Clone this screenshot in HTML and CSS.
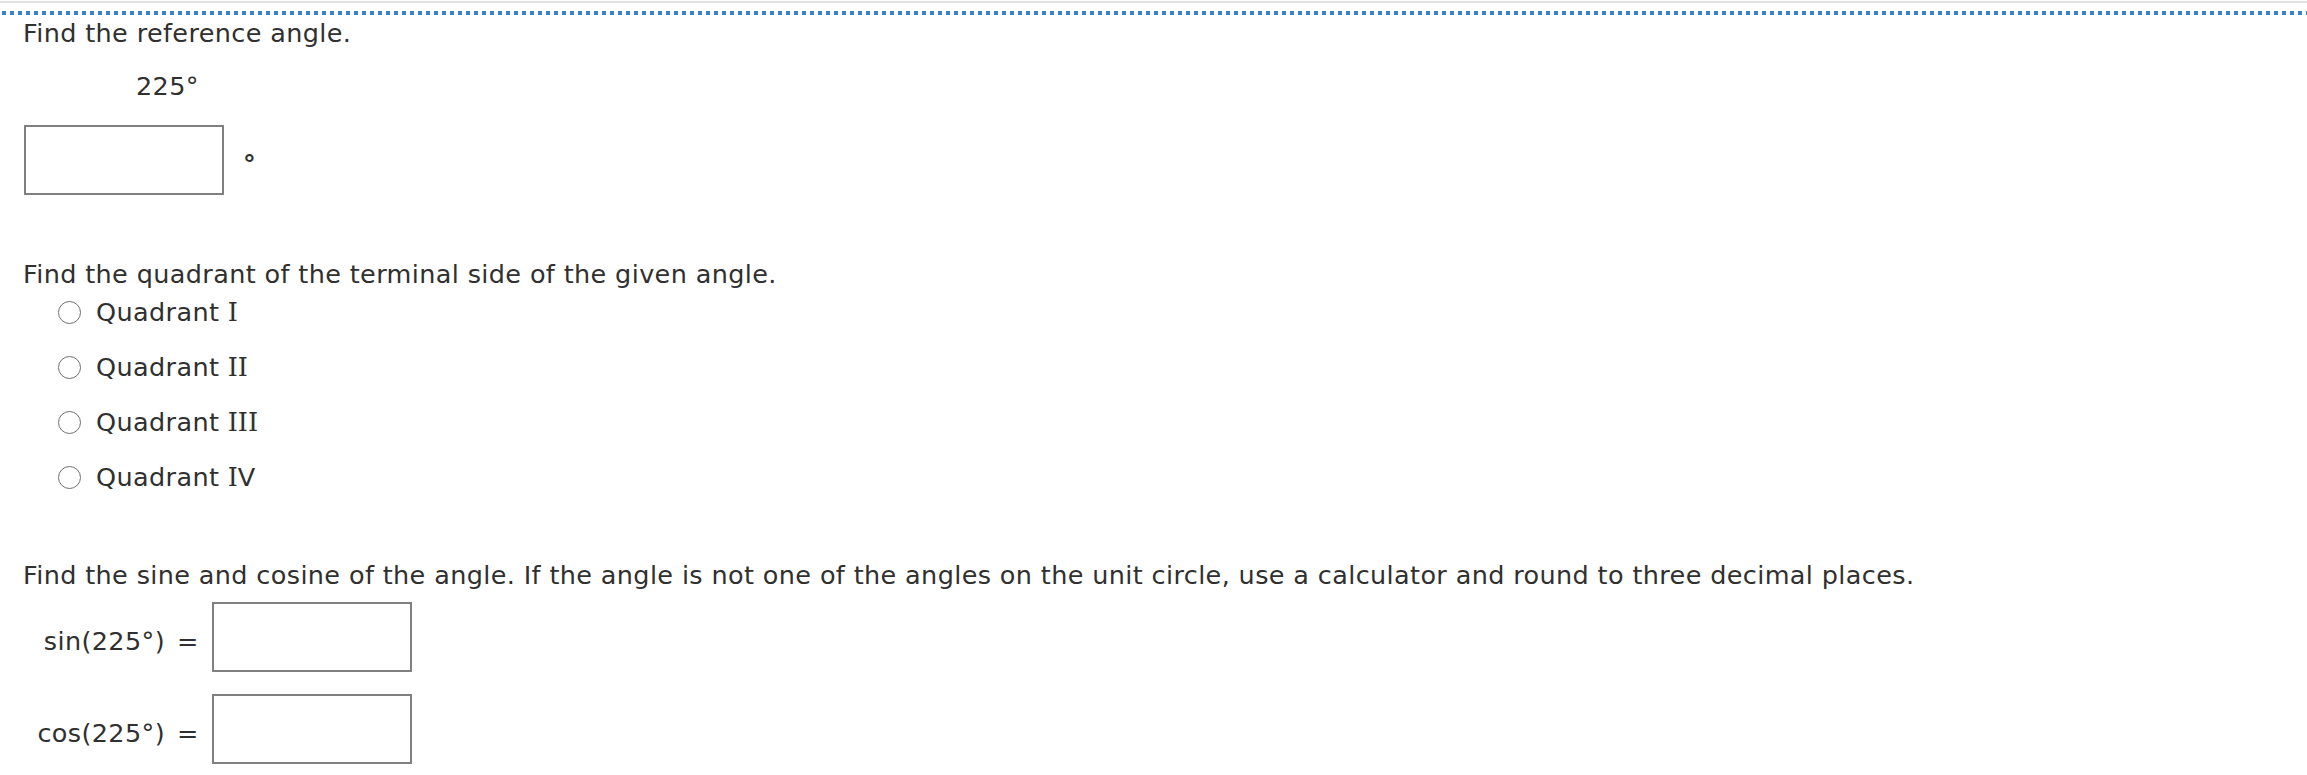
FILE: index.html
```html
<!DOCTYPE html>
<html>
<head>
<meta charset="utf-8">
<link rel="stylesheet" href="styles.css">
</head>
<body>
<div class="topbar"></div>
<div class="dots"></div>
<div class="content">
  <p class="line">Find the reference angle.</p>
  <p class="line given">225°</p>
  <div class="answer-row">
    <div class="box"></div>
    <span class="deg">°</span>
  </div>

  <p class="line q2">Find the quadrant of the terminal side of the given angle.</p>
  <div class="options">
    <div class="option"><span class="radio"></span><span class="line">Quadrant <span class="roman">I</span></span></div>
    <div class="option"><span class="radio"></span><span class="line">Quadrant <span class="roman">II</span></span></div>
    <div class="option"><span class="radio"></span><span class="line">Quadrant <span class="roman">III</span></span></div>
    <div class="option"><span class="radio"></span><span class="line">Quadrant <span class="roman">I</span>V</span></div>
  </div>

  <p class="line q3">Find the sine and cosine of the angle. If the angle is not one of the angles on the unit circle, use a calculator and round to three decimal places.</p>
  <div class="trig">
    <span class="label">sin(225°)</span><span class="eq">=</span><div class="box small"></div>
    <span class="label">cos(225°)</span><span class="eq">=</span><div class="box small"></div>
  </div>
</div>
</body>
</html>
```

FILE: styles.css
```css
html, body {
  margin: 0;
  padding: 0;
  background: #ffffff;
}
body {
  font-family: "DejaVu Sans", Verdana, sans-serif;
  font-size: 25.5px;
  letter-spacing: 0.37px;
  color: #303030;
}
.topbar {
  margin-top: 1px;
  height: 2px;
  background: #e1e1e1;
}
.dots {
  margin-top: 8px;
  height: 4px;
  background-image: linear-gradient(to right, #3a7fd6 50%, transparent 50%);
  background-size: 8px 4px;
  background-position: 2px 0;
  background-repeat: repeat-x;
}
.content {
  padding-left: 23px;
}
.line {
  margin: 0;
  line-height: 36px;
}
.roman {
  font-family: "DejaVu Serif", serif;
  letter-spacing: 0;
}
.given {
  margin-top: 17px;
  padding-left: 113px;
}
.answer-row {
  display: flex;
  align-items: center;
  margin-top: 21px;
}
.box {
  width: 196px;
  height: 66px;
  border: 2px solid #808080;
  background: #fff;
  margin-left: 1px;
}
.deg {
  line-height: 36px;
  margin-left: 19px;
  margin-top: 8px;
  font-weight: bold;
}
.q2 {
  margin-top: 61px;
}
.options {
  display: flex;
  flex-direction: column;
  gap: 19px;
  margin-top: 2px;
}
.option {
  display: flex;
  align-items: center;
  padding-left: 35px;
}
.radio {
  width: 21px;
  height: 21px;
  border: 1.5px solid #707070;
  border-radius: 50%;
  margin-right: 15px;
}
.q3 {
  margin-top: 62px;
}
.trig {
  display: grid;
  grid-template-columns: 142px 47px 200px;
  row-gap: 22px;
  align-items: center;
  margin-top: 9px;
}
.label {
  text-align: right;
  line-height: 36px;
  margin-top: 8px;
}
.eq {
  line-height: 36px;
  padding-left: 12px;
  margin-top: 8px;
}
.box.small {
  margin-left: 0;
}
```
